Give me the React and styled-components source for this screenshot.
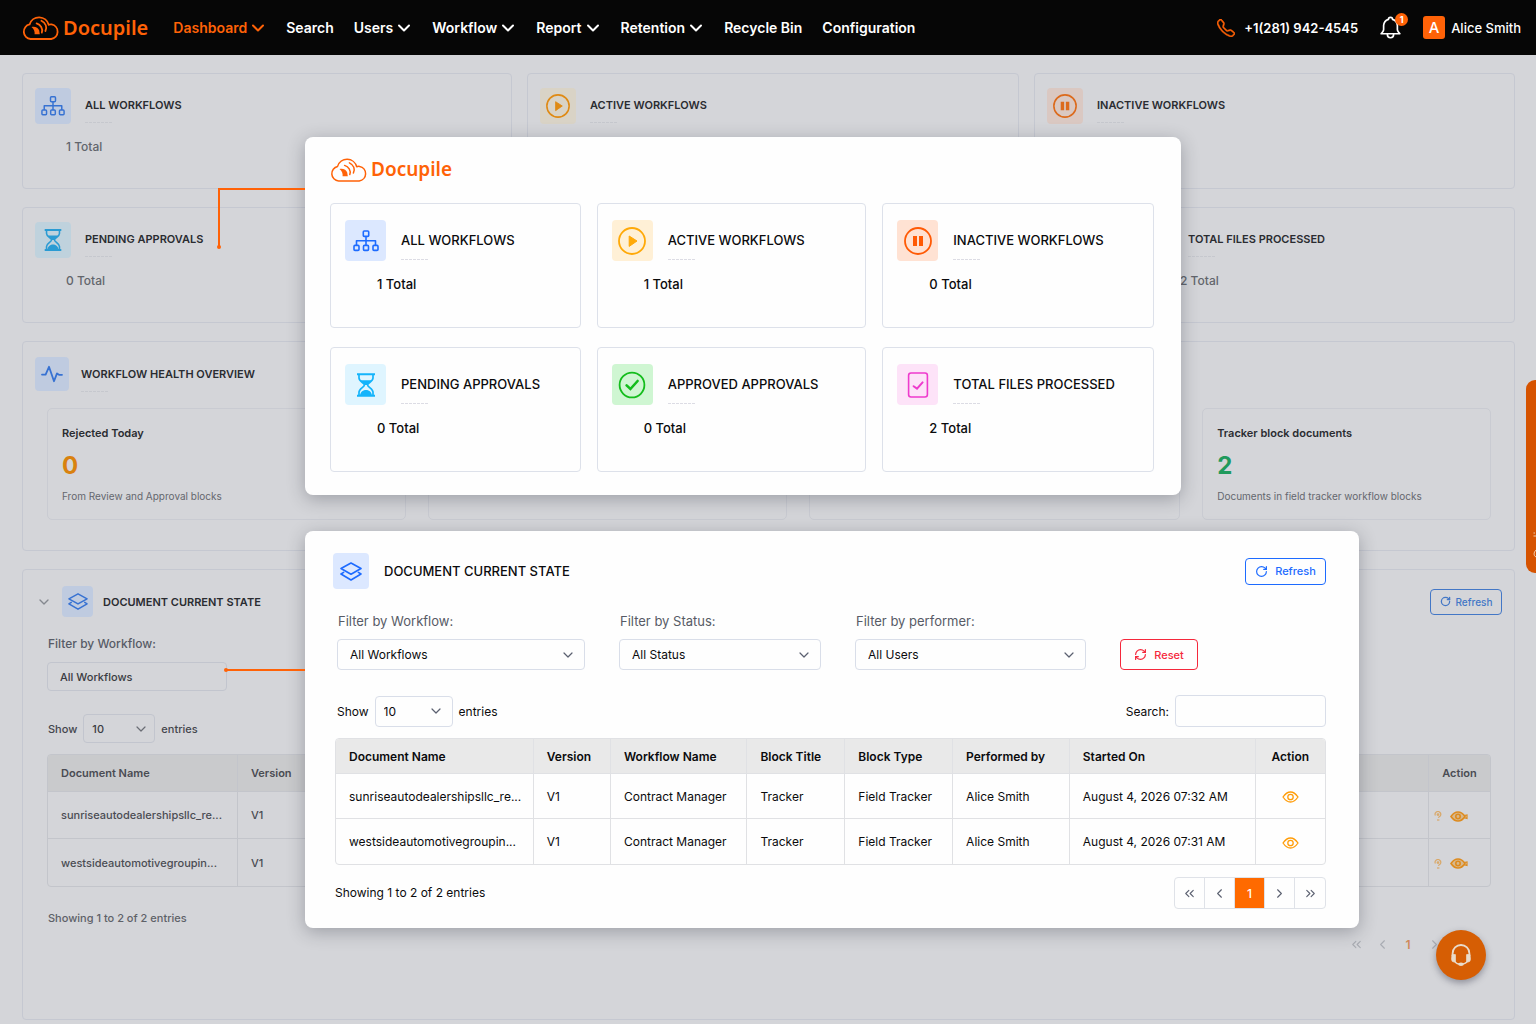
import React from "react";
import styled, { createGlobalStyle } from "styled-components";
import { ChevronDown, ChevronLeft, ChevronRight, ChevronsLeft, ChevronsRight, RotateCw, RefreshCw } from "lucide-react";
import { BsTelephone } from "react-icons/bs";

const GlobalStyle = createGlobalStyle`
    * {
        box-sizing: border-box;
    }
    body {
        margin: 0;
        font-family: Inter, "Liberation Sans", sans-serif;
        background: #d4d5d9;
        color: #0b0b0d;
    }
    button, select, input {
        font-family: inherit;
    }
`

const Page = styled.div`
    position: relative;
    min-height: 100vh;
    overflow: hidden;
`

/* ---------- top bar ---------- */

const Header = styled.header`
    display: flex;
    align-items: center;
    height: 55px;
    padding: 0 15px 0 22px;
    background: #060606;
`

const LogoLink = styled.a`
    display: flex;
    align-items: center;
    gap: 3px;
    height: 28px;
    color: #ff6207;
    font-family: "Noto Sans", "Open Sans", sans-serif;
    font-size: ${props => props.$large ? "20px" : "19px"};
    font-weight: 600;
    line-height: 28px;
    text-decoration: none;
`

const Nav = styled.nav`
    margin-left: 25px;
    margin-right: auto;
`

const NavList = styled.ul`
    display: flex;
    gap: 20px;
    margin: 0;
    padding: 0;
    list-style: none;
`

const NavLink = styled.a`
    display: flex;
    align-items: center;
    gap: 1px;
    color: ${props => props.$active ? "#ff6207" : "white"};
    font-size: 14px;
    font-weight: 600;
    line-height: 20px;
    text-decoration: none;
    white-space: nowrap;
    svg {
        margin-right: -2px;
    }
`

const HeaderRight = styled.div`
    display: flex;
    align-items: center;
    gap: 20px;
    color: white;
    white-space: nowrap;
`

const PhoneLink = styled.a`
    display: flex;
    align-items: center;
    gap: 9px;
    color: white;
    font-size: 13px;
    font-weight: 600;
    text-decoration: none;
    svg {
        color: #ff6207;
        stroke: #ff6207;
        stroke-width: 0.5px;
    }
`

const BellButton = styled.button`
    position: relative;
    display: flex;
    padding: 0;
    border: 0;
    background: none;
    color: white;
    cursor: pointer;
`

const BellBadge = styled.span`
    position: absolute;
    top: -2px;
    right: -5px;
    width: 13px;
    height: 13px;
    border-radius: 50%;
    background: #ff6207;
    font-size: 9px;
    font-weight: 700;
    line-height: 13px;
    text-align: center;
`

const UserButton = styled.button`
    display: flex;
    align-items: center;
    gap: 6px;
    padding: 0;
    border: 0;
    background: none;
    color: white;
    font-size: 13px;
    font-weight: 500;
    cursor: pointer;
`

const Avatar = styled.span`
    width: 22px;
    height: 23px;
    border-radius: 3px;
    background: #ff6207;
    font-size: 15px;
    font-weight: 500;
    line-height: 23px;
`

/* ---------- dashboard behind the panels ---------- */

const Main = styled.main`
    display: flex;
    flex-direction: column;
    gap: 18px;
    padding: 18px 21px 4px 22px;
`

const StatGrid = styled.div`
    display: grid;
    grid-template-columns: ${props => props.$columns};
    gap: ${props => props.$gap};
`

const Card = styled.section`
    border: 1px solid ${props => props.$dim ? "#c5c8d1" : "#dde1ea"};
    border-radius: 4px;
`

const StatBox = styled(Card)`
    min-height: ${props => props.$dim ? "116px" : "125px"};
    padding: ${props => props.$dim ? "14px 12px" : "16px 14px"};
`

const StatHead = styled.div`
    display: flex;
    gap: ${props => props.$dim ? "14px" : "15px"};
`

const tints = {
    blue: { color: "#1d6bff", bg: "#dce8ff", dimColor: "#3772d2", dimBg: "#bfcbe0" },
    yellow: { color: "#ffa908", bg: "#fff0d6", dimColor: "#df8a14", dimBg: "#d9d3c6" },
    orange: { color: "#ff5a05", bg: "#ffe2d3", dimColor: "#dc6a1c", dimBg: "#dac8c2" },
    cyan: { color: "#14b4fb", bg: "#dff5ff", dimColor: "#2a9bd3", dimBg: "#bfd2dd" },
    green: { color: "#14bd1c", bg: "#cff6d2", dimColor: "#2f9e3c", dimBg: "#bfd6c4" },
    pink: { color: "#ee3bcd", bg: "#fde3f8", dimColor: "#c04aa9", dimBg: "#d8c6d5" },
}

const IconTile = styled.span`
    display: flex;
    flex: none;
    align-items: center;
    justify-content: center;
    width: ${props => props.$size}px;
    height: ${props => props.$size}px;
    border-radius: 4px;
    color: ${props => props.$dim ? tints[props.$tint].dimColor : tints[props.$tint].color};
    background: ${props => props.$dim ? tints[props.$tint].dimBg : tints[props.$tint].bg};
`

const TitleGroup = styled.div`
    padding-top: ${props => props.$dim ? "7px" : "10px"};
`

const Title = styled.h2`
    margin: 0;
    font-size: ${props => props.$dim ? "11px" : "13px"};
    font-weight: ${props => props.$dim ? "600" : "500"};
    line-height: 20px;
    color: ${props => props.$dim ? "#2a2c31" : "#0b0b0d"};
    white-space: nowrap;
`

const Dashes = styled.div`
    width: 28px;
    height: 1px;
    margin-top: ${props => props.$dim ? "7px" : "9px"};
    background: repeating-linear-gradient(90deg, ${props => props.$dim ? "#c6c8ce" : "#dcdce4"} 0 3px, transparent 3px 4px);
`

const Total = styled.p`
    margin: 13px 0 0;
    padding-left: ${props => props.$indent}px;
    font-size: ${props => props.$dim ? "12px" : "13px"};
    font-weight: 500;
    line-height: 20px;
    color: ${props => props.$dim ? "#62656c" : "#0b0b0d"};
`

const HealthCard = styled(Card)`
    padding: 15px 23px 30px 24px;
`

const HealthHead = styled.div`
    display: flex;
    gap: 12px;
    margin: 0 0 16px -12px;
`

const HealthGrid = styled.div`
    display: grid;
    grid-template-columns: 359fr 360fr 371fr 289fr;
    gap: 22px;
`

const HealthBox = styled.div`
    height: 112px;
    padding: 15px 14px;
    border: 1px solid #c9cbd2;
    border-radius: 5px;
`

const HealthLabel = styled.h3`
    margin: 0;
    font-size: 11px;
    font-weight: 600;
    line-height: 18px;
    color: #2a2c31;
`

const HealthValue = styled.p`
    margin: 8px 0;
    font-size: 24px;
    font-weight: 700;
    line-height: 32px;
    color: ${props => props.$color};
`

const HealthNote = styled.p`
    margin: 0;
    font-size: 10px;
    font-weight: 400;
    line-height: 12px;
    color: #64676e;
`

const StateCard = styled(Card)`
    min-height: 451px;
    padding: 16px 23px 16px 24px;
`

const StateHead = styled.div`
    display: flex;
    align-items: center;
    gap: ${props => props.$dim ? "10px" : "15px"};
    margin-left: ${props => props.$dim ? "-11px" : "0"};
    margin-right: ${props => props.$dim ? "-11px" : "0"};
    > svg {
        color: #85888f;
    }
    > button {
        margin-left: auto;
    }
`

/* ---------- controls ---------- */

const OutlineButton = styled.button`
    display: flex;
    flex: none;
    align-items: center;
    justify-content: center;
    gap: ${props => props.$dim ? "5px" : "7px"};
    height: ${props => props.$height}px;
    width: ${props => props.$width}px;
    padding: 0;
    border: 1px solid ${props => props.$color};
    border-radius: 4px;
    background: transparent;
    color: ${props => props.$color};
    font-size: ${props => props.$dim ? "10px" : "11px"};
    font-weight: 500;
    cursor: pointer;
`

const Filters = styled.div`
    display: flex;
    align-items: flex-end;
    gap: 34px;
    margin-top: ${props => props.$dim ? "18px" : "23px"};
    padding-left: ${props => props.$dim ? "0" : "4px"};
`

const FilterField = styled.div`
    flex: 0 1 ${props => props.$width}px;
`

const FilterLabel = styled.label`
    display: block;
    margin-bottom: 9px;
    padding-left: 1px;
    font-size: ${props => props.$dim ? "12px" : "13px"};
    font-weight: ${props => props.$dim ? "500" : "400"};
    line-height: 18px;
    color: #575b66;
`

const SelectWrap = styled.div`
    display: grid;
    align-items: center;
    width: ${props => props.$width ? props.$width + "px" : "100%"};
    > * {
        grid-area: 1 / 1;
    }
    svg {
        justify-self: end;
        margin-right: ${props => props.$dim ? "6px" : "9px"};
        color: ${props => props.$dim ? "#6a6d75" : "#5b6070"};
        pointer-events: none;
    }
`

const StyledSelect = styled.select`
    appearance: none;
    width: 100%;
    height: ${props => props.$dim ? "29px" : "31px"};
    padding: 0 ${props => props.$pad}px;
    border: 1px solid ${props => props.$dim ? "#c2c5ce" : "#d9dee9"};
    border-radius: 4px;
    background: transparent;
    color: ${props => props.$dim ? "#3a3c42" : "#0b0b0d"};
    font-size: ${props => props.$dim ? "11px" : "12px"};
    font-weight: ${props => props.$dim ? "500" : "400"};
`

const Toolbar = styled.div`
    display: flex;
    align-items: center;
    justify-content: space-between;
    margin: ${props => props.$dim ? "23px 0 11px" : "25px 0 11px"};
    padding-left: ${props => props.$dim ? "1px" : "4px"};
    font-size: ${props => props.$dim ? "11px" : "12px"};
    font-weight: ${props => props.$dim ? "500" : "400"};
    color: ${props => props.$dim ? "#44464d" : "#0b0b0d"};
`

const ToolbarGroup = styled.div`
    display: flex;
    align-items: center;
    gap: 6px;
`

const SearchInput = styled.input`
    width: 151px;
    height: 32px;
    padding: 0 10px;
    border: 1px solid #d9dee9;
    border-radius: 4px;
    background: transparent;
    font-size: 12px;
`

const TableWrap = styled.div`
    margin-left: ${props => props.$dim ? "0" : "2px"};
    border: 1px solid ${props => props.$dim ? "#c3c5cb" : "#e0e1e4"};
    border-radius: 4px;
    overflow: hidden;
`

const Table = styled.table`
    width: 100%;
    table-layout: fixed;
    border-collapse: separate;
    border-spacing: 0;
    font-size: ${props => props.$dim ? "11px" : "12px"};
    color: ${props => props.$dim ? "#4a4c53" : "#0b0b0d"};
    th, td {
        padding: 0 13px;
        border-right: 1px solid ${props => props.$dim ? "#c3c5cb" : "#e0e1e4"};
        border-bottom: 1px solid ${props => props.$dim ? "#c3c5cb" : "#e0e1e4"};
        text-align: left;
        white-space: nowrap;
    }
    th {
        height: ${props => props.$dim ? "37px" : "35px"};
        background: ${props => props.$dim ? "#c9cacc" : "#e9e9e9"};
        font-weight: 600;
    }
    td {
        height: ${props => props.$dim ? "47px" : "45px"};
        font-weight: ${props => props.$dim ? "500" : "400"};
    }
    th:last-child, td:last-child {
        padding: 0 5px;
        border-right: 0;
        text-align: center;
    }
    td:last-child {
        text-align: ${props => props.$dim ? "left" : "center"};
    }
    tbody tr:last-child td {
        border-bottom: 0;
    }
`

const ActionButton = styled.button`
    display: inline-flex;
    align-items: center;
    gap: 8px;
    padding: 0;
    border: 0;
    background: none;
    color: ${props => props.$dim ? "#dd8b1f" : "#ff9d0a"};
    vertical-align: middle;
    cursor: pointer;
`

const Showing = styled.p`
    margin: 0;
    font-size: ${props => props.$dim ? "11px" : "12px"};
    font-weight: ${props => props.$dim ? "500" : "400"};
    line-height: 18px;
    color: ${props => props.$dim ? "#5e6168" : "#0b0b0d"};
`

const PanelFooter = styled.div`
    display: flex;
    align-items: center;
    justify-content: space-between;
    margin-top: 12px;
    padding-left: 2px;
`

const DimFooter = styled.div`
    padding: 22px 18px 0 1px;
`

const Pager = styled.div`
    display: flex;
    border: 1px solid #dfe2e8;
    border-radius: 4px;
`

const PagerButton = styled.button`
    display: flex;
    align-items: center;
    justify-content: center;
    width: 30px;
    height: 30px;
    padding: 0;
    border: 0;
    border-right: 1px solid #dfe2e8;
    background: ${props => props.$current ? "#ff6a00" : "transparent"};
    color: ${props => props.$current ? "white" : "#5b6070"};
    font-size: 12px;
    font-weight: 500;
    cursor: pointer;
    &:last-child {
        border-right: 0;
    }
`

const DimPager = styled(Pager)`
    justify-content: flex-end;
    margin-top: 8px;
    border: 0;
    ${PagerButton} {
        width: 26px;
        height: 18px;
        border: 0;
        background: none;
        color: #a9acb3;
    }
    ${PagerButton}[aria-current] {
        color: #d08a5a;
        font-weight: 600;
    }
`

/* ---------- panels on top ---------- */

const Overlay = styled.div`
    position: absolute;
    top: 137px;
    left: 305px;
    right: 177px;
    display: flex;
    flex-direction: column;
    gap: 36px;
`

const Panel = styled.section`
    position: relative;
    border-radius: 8px;
    background: #fefefe;
    box-shadow: 0 4px 18px rgba(30, 34, 48, 0.3);
`

const SummaryPanel = styled(Panel)`
    margin-right: 178px;
    padding: 18px 27px 23px 25px;
    ${StatGrid} {
        margin-top: 20px;
    }
`

const StatePanel = styled(Panel)`
    padding: 22px 33px 19px 28px;
`

const Connector = styled.span`
    position: absolute;
    right: 100%;
    top: ${props => props.$top}px;
    width: ${props => props.$width}px;
    height: ${props => props.$height}px;
    border-top: 2px solid #ff6207;
    border-left: ${props => props.$height > 2 ? "2px solid #ff6207" : "0"};
    &::after {
        content: "";
        position: absolute;
        left: -3px;
        bottom: -1px;
        width: 4px;
        height: 4px;
        border-radius: 50%;
        background: #ff6207;
    }
`

const SideTab = styled.button`
    position: absolute;
    top: 380px;
    right: 0;
    display: flex;
    align-items: flex-start;
    justify-content: flex-end;
    width: 10px;
    height: 193px;
    padding: 150px 0 0;
    border: 0;
    border-radius: 9px 0 0 9px;
    background: #d65300;
    cursor: pointer;
`

const HelpButton = styled.button`
    position: absolute;
    top: 930px;
    right: 50px;
    display: flex;
    align-items: center;
    justify-content: center;
    width: 50px;
    height: 50px;
    padding: 0;
    border: 0;
    border-radius: 50%;
    background: #d65e04;
    box-shadow: 0 3px 7px rgba(40, 40, 60, 0.4);
    color: #e9dccb;
    cursor: pointer;
`

/* ---------- icons ---------- */

const CloudMark = ({ stroke }) => (
    <svg width="38" height="27" viewBox="0 0 38 27" fill="none" stroke="currentColor" strokeWidth={stroke} strokeLinecap="round" strokeLinejoin="round">
        <path d="M8.6 25H29.2A7.4 7.4 0 0 0 29.6 10.4Q28 10.2 26.7 10.8A9.9 9.9 0 0 0 7.6 10.4A7.4 7.4 0 0 0 8.6 25Z" />
        <path d="M9.5 13C13 12.2 16.4 13.6 17.2 16.6L17.8 20.3H12.6C13 17.4 11.8 15 9.5 13Z" fill="currentColor" stroke="none" />
        <path d="M14.6 9.4C18.6 10.8 21.2 14.4 19.8 18.6" />
        <path d="M19.4 6.8C23.8 9 25.4 13 23.4 17" />
    </svg>
)

const BellIcon = () => (
    <svg width="25" height="25" viewBox="0 0 24 24" fill="none" stroke="currentColor" strokeWidth="1.6" strokeLinecap="round" strokeLinejoin="round">
        <path d="M15 18H21L19.4 16A3 3 0 0 1 18.6 14V10A6.6 6.6 0 0 0 14 4.2A2 2 0 0 0 10 4.2A6.6 6.6 0 0 0 5.4 10V14A3 3 0 0 1 4.6 16L3 18H9M15 18V18.8A3 3 0 0 1 9 18.8V18M15 18H9" />
    </svg>
)

const SitemapIcon = ({ size = 26 }) => (
    <svg width={size} height={size} viewBox="0 0 26 26" fill="none" stroke="currentColor" strokeWidth="1.6" strokeLinejoin="round">
        <rect x="10.3" y="3" width="5.4" height="5.4" rx="1" />
        <rect x="1" y="17.4" width="5" height="5" rx="1" />
        <rect x="10.5" y="17.4" width="5" height="5" rx="1" />
        <rect x="20" y="17.4" width="5" height="5" rx="1" />
        <path d="M13 8.4V17.4M3.5 17.4V12.8H22.5V17.4" />
    </svg>
)

const PlayIcon = ({ size = 28 }) => (
    <svg width={size} height={size} viewBox="0 0 28 28" fill="none" stroke="currentColor" strokeWidth="1.8">
        <circle cx="14" cy="14" r="13" />
        <path d="M11.2 9L19 14L11.2 19.4Z" fill="currentColor" strokeWidth="1" strokeLinejoin="round" />
    </svg>
)

const PauseIcon = ({ size = 28 }) => (
    <svg width={size} height={size} viewBox="0 0 28 28" fill="none" stroke="currentColor" strokeWidth="1.8">
        <circle cx="14" cy="14" r="13" />
        <path d="M9 9H13V19H9ZM15 9H19V19H15Z" fill="currentColor" stroke="none" />
    </svg>
)

const HourglassIcon = ({ size = 26 }) => (
    <svg width={size} height={size} viewBox="0 0 26 26" fill="none" stroke="currentColor" strokeWidth="1.7">
        <path d="M4 2.2H22M4 23.8H22" strokeWidth="2" />
        <path d="M6 2.5V6C6 9.6 11.4 11 11.4 13S6 16.6 6 20V23.5M20 2.5V6C20 9.6 14.6 11 14.6 13S20 16.6 20 20V23.5" />
        <path d="M7 8.2H19C17.6 10.2 14.6 11.4 14 13H12C11.4 11.4 8.4 10.2 7 8.2ZM7 23.4C7.4 19.8 10.4 18 13 18S18.6 19.8 19 23.4Z" fill="currentColor" stroke="none" />
    </svg>
)

const CheckCircleIcon = ({ size = 28 }) => (
    <svg width={size} height={size} viewBox="0 0 28 28" fill="none" stroke="currentColor" strokeWidth="1.8">
        <circle cx="14" cy="14" r="12.4" />
        <path d="M8.6 14.4L12.4 18L19.6 10" strokeWidth="2.6" strokeLinecap="round" />
    </svg>
)

const FileCheckIcon = ({ size = 26 }) => (
    <svg width={size} height={size} viewBox="0 0 26 26" fill="none" stroke="currentColor" strokeWidth="1.6" strokeLinecap="round">
        <rect x="3.6" y="1" width="18.8" height="24" rx="2.4" />
        <path d="M8.6 14.2L12 16.6L17.6 10.4" strokeWidth="2" />
    </svg>
)

const PulseIcon = () => (
    <svg width="22" height="18" viewBox="0 0 22 18" fill="none" stroke="currentColor" strokeWidth="1.8" strokeLinecap="round" strokeLinejoin="round">
        <path d="M1 9.6H4.6L8 1.8L13 16.2L16 8.4L18 9.8H21" />
    </svg>
)

const LayersIcon = ({ width = 22 }) => (
    <svg width={width} height="19" viewBox="0 0 22 19" fill="none" stroke="currentColor" strokeWidth="1.6" strokeLinejoin="round" strokeLinecap="round">
        <path d="M11 1L21 6.5L11 12.2L1 6.5Z" />
        <path d="M3.6 10.4L1 12L11 18L21 12L18.4 10.4" />
    </svg>
)

const EyeIcon = () => (
    <svg width="17" height="12" viewBox="0 0 17 12" fill="none" stroke="currentColor" strokeWidth="1.3">
        <path d="M1 6Q4.4 1 8.5 1T16 6Q12.6 11 8.5 11T1 6Z" />
        <circle cx="8.5" cy="6" r="2.7" />
    </svg>
)

const DimEyeIcon = () => (
    <svg width="18" height="11" viewBox="0 0 18 11" fill="none" stroke="currentColor" strokeWidth="1.6">
        <path d="M1 5.5Q4 1 8 1T15 5.5Q12 10 8 10T1 5.5Z" fill="currentColor" fillOpacity="0.4" />
        <circle cx="8" cy="5.5" r="2.2" />
        <path d="M14 4.6L17 4V7.4L14 6.6" strokeWidth="1.2" />
    </svg>
)

const AssignIcon = () => (
    <svg width="8" height="10" viewBox="0 0 8 10" fill="none" stroke="currentColor" strokeWidth="1.2" opacity="0.6">
        <path d="M1.4 4.6A2.8 2.8 0 1 1 6 5.2L4.2 6.6" />
        <circle cx="4" cy="3.6" r="0.8" />
        <path d="M3 9H5.4" />
    </svg>
)

const HeadsetIcon = () => (
    <svg width="22" height="24" viewBox="0 0 22 24" fill="none" stroke="currentColor" strokeWidth="1.8">
        <path d="M2.6 13V10.4A8.4 8.4 0 0 1 19.4 10.4V13" />
        <path d="M2 11.6H5.4V19H4A2.6 2.6 0 0 1 1.6 16.4ZM20 11.6H16.6V19H18A2.6 2.6 0 0 0 20.4 16.4Z" fill="currentColor" strokeWidth="0.8" />
        <path d="M5 19Q6.8 21 10 21.2" strokeWidth="1.4" />
        <path d="M17 19Q15.4 20.8 12 21.2" strokeWidth="1.4" />
        <ellipse cx="11" cy="21.2" rx="2.8" ry="1.8" fill="currentColor" stroke="none" />
    </svg>
)

const navItems = [
    { label: "Dashboard", menu: true, active: true },
    { label: "Search" },
    { label: "Users", menu: true },
    { label: "Workflow", menu: true },
    { label: "Report", menu: true },
    { label: "Retention", menu: true },
    { label: "Recycle Bin" },
    { label: "Configuration" },
]

const stats = [
    { title: "ALL WORKFLOWS", total: 1, tint: "blue", Icon: SitemapIcon },
    { title: "ACTIVE WORKFLOWS", total: 1, tint: "yellow", Icon: PlayIcon },
    { title: "INACTIVE WORKFLOWS", total: 0, tint: "orange", Icon: PauseIcon },
    { title: "PENDING APPROVALS", total: 0, tint: "cyan", Icon: HourglassIcon },
    { title: "APPROVED APPROVALS", total: 0, tint: "green", Icon: CheckCircleIcon },
    { title: "TOTAL FILES PROCESSED", total: 2, tint: "pink", Icon: FileCheckIcon, dimIndent: 42 },
]

const columns = ["Document Name", "Version", "Workflow Name", "Block Title", "Block Type", "Performed by", "Started On", "Action"]
const panelWidths = ["20%", "7.8%", "13.8%", "9.9%", "10.9%", "11.8%", "18.8%", "7%"]
const dimWidths = ["190px", "100px", "160px", "130px", "140px", "140px", "auto", "61px"]

const documents = [
    ["sunriseautodealershipsllc_re...", "V1", "Contract Manager", "Tracker", "Field Tracker", "Alice Smith", "August 4, 2026 07:32 AM"],
    ["westsideautomotivegroupin...", "V1", "Contract Manager", "Tracker", "Field Tracker", "Alice Smith", "August 4, 2026 07:31 AM"],
]

const Logo = ({ large }) => (
    <LogoLink href="#" $large={large}>
        <CloudMark stroke={large ? 1.8 : 1.5} />
        Docupile
    </LogoLink>
)

const Stat = ({ stat, dim }) => {
    const { title, total, tint, Icon, dimIndent } = stat
    return (
        <StatBox $dim={dim}>
            <StatHead $dim={dim}>
                <IconTile $size={dim ? 36 : 41} $tint={tint} $dim={dim}>
                    <Icon size={dim ? 24 : undefined} />
                </IconTile>
                <TitleGroup $dim={dim}>
                    <Title $dim={dim}>{title}</Title>
                    <Dashes $dim={dim} />
                </TitleGroup>
            </StatHead>
            <Total $dim={dim} $indent={dim ? dimIndent || 31 : 32}>{total} Total</Total>
        </StatBox>
    )
}

const Select = ({ id, value, width, dim, pad = 12, arrow = true }) => (
    <SelectWrap $width={width} $dim={dim}>
        <StyledSelect id={id} $dim={dim} $pad={pad} defaultValue={value}>
            <option>{value}</option>
        </StyledSelect>
        {arrow && <ChevronDown size={16} strokeWidth={1.8} />}
    </SelectWrap>
)

const Filter = ({ id, label, value, width, dim, arrow }) => (
    <FilterField $width={width}>
        <FilterLabel htmlFor={id} $dim={dim}>{label}</FilterLabel>
        <Select id={id} value={value} dim={dim} arrow={arrow} />
    </FilterField>
)

const EntriesPicker = ({ id, dim }) => (
    <ToolbarGroup>
        <label htmlFor={id}>Show</label>
        <Select id={id} value="10" width={dim ? 72 : 78} dim={dim} pad={8} />
        <span>entries</span>
    </ToolbarGroup>
)

const DocumentTable = ({ dim }) => (
    <TableWrap $dim={dim}>
        <Table $dim={dim}>
            <colgroup>
                {(dim ? dimWidths : panelWidths).map((width, i) => <col key={i} width={width} />)}
            </colgroup>
            <thead>
                <tr>
                    {columns.map(column => <th key={column} scope="col">{column}</th>)}
                </tr>
            </thead>
            <tbody>
                {documents.map(row => (
                    <tr key={row[0]}>
                        {row.map((cell, i) => <td key={i}>{cell}</td>)}
                        <td>
                            <ActionButton $dim={dim} aria-label="View document">
                                {dim ? <><AssignIcon /><DimEyeIcon /></> : <EyeIcon />}
                            </ActionButton>
                        </td>
                    </tr>
                ))}
            </tbody>
        </Table>
    </TableWrap>
)

const PagerButtons = () => (
    <>
        <PagerButton aria-label="First page"><ChevronsLeft size={15} strokeWidth={1.8} /></PagerButton>
        <PagerButton aria-label="Previous page"><ChevronLeft size={15} strokeWidth={1.8} /></PagerButton>
        <PagerButton $current aria-current="page">1</PagerButton>
        <PagerButton aria-label="Next page"><ChevronRight size={15} strokeWidth={1.8} /></PagerButton>
        <PagerButton aria-label="Last page"><ChevronsRight size={15} strokeWidth={1.8} /></PagerButton>
    </>
)

const TopBar = () => (
    <Header>
        <Logo large />
        <Nav>
            <NavList>
                {navItems.map(item => (
                    <li key={item.label}>
                        <NavLink href="#" $active={item.active}>
                            {item.label}
                            {item.menu && <ChevronDown size={20} strokeWidth={2.4} />}
                        </NavLink>
                    </li>
                ))}
            </NavList>
        </Nav>
        <HeaderRight>
            <PhoneLink href="tel:+12819424545">
                <BsTelephone size={18} />
                +1(281) 942-4545
            </PhoneLink>
            <BellButton aria-label="Notifications">
                <BellIcon />
                <BellBadge>1</BellBadge>
            </BellButton>
            <UserButton>
                <Avatar>A</Avatar>
                Alice Smith
            </UserButton>
        </HeaderRight>
    </Header>
)

const Dashboard = () => (
    <Main>
        <StatGrid $columns="490fr 492fr 481fr" $gap="15px">
            {stats.slice(0, 3).map(stat => <Stat key={stat.title} stat={stat} dim />)}
        </StatGrid>
        <StatGrid $columns="536fr 537fr 390fr" $gap="15px">
            <Stat stat={stats[3]} dim />
            <StatBox $dim />
            <Stat stat={stats[5]} dim />
        </StatGrid>
        <HealthCard $dim>
            <HealthHead>
                <IconTile $size={34} $tint="blue" $dim><PulseIcon /></IconTile>
                <TitleGroup $dim>
                    <Title $dim>WORKFLOW HEALTH OVERVIEW</Title>
                    <Dashes $dim />
                </TitleGroup>
            </HealthHead>
            <HealthGrid>
                <HealthBox>
                    <HealthLabel>Rejected Today</HealthLabel>
                    <HealthValue $color="#d9820f">0</HealthValue>
                    <HealthNote>From Review and Approval blocks</HealthNote>
                </HealthBox>
                <HealthBox />
                <HealthBox />
                <HealthBox>
                    <HealthLabel>Tracker block documents</HealthLabel>
                    <HealthValue $color="#1f9a5c">2</HealthValue>
                    <HealthNote>Documents in field tracker workflow blocks</HealthNote>
                </HealthBox>
            </HealthGrid>
        </HealthCard>
        <StateCard $dim>
            <StateHead $dim>
                <ChevronDown size={16} strokeWidth={2} />
                <IconTile $size={31} $tint="blue" $dim><LayersIcon width={20} /></IconTile>
                <Title $dim>DOCUMENT CURRENT STATE</Title>
                <OutlineButton $dim $color="#4377c6" $width={72} $height={26}>
                    <RotateCw size={11} strokeWidth={2.8} />
                    Refresh
                </OutlineButton>
            </StateHead>
            <Filters $dim>
                <Filter id="page-workflow" label="Filter by Workflow:" value="All Workflows" width={180} arrow={false} dim />
            </Filters>
            <Toolbar $dim>
                <EntriesPicker id="page-entries" dim />
            </Toolbar>
            <DocumentTable dim />
            <DimFooter>
                <Showing $dim>Showing 1 to 2 of 2 entries</Showing>
                <DimPager as="nav" aria-label="Dashboard pages"><PagerButtons /></DimPager>
            </DimFooter>
        </StateCard>
    </Main>
)

const App = () => {
    return (
        <Page>
            <GlobalStyle />
            <TopBar />
            <Dashboard />

            <Overlay>
                <SummaryPanel>
                    <Connector $top={51} $width={87} $height={60} />
                    <Logo />
                    <StatGrid $columns="251fr 270fr 272fr" $gap="19px 16px">
                        {stats.map(stat => <Stat key={stat.title} stat={stat} />)}
                    </StatGrid>
                </SummaryPanel>

                <StatePanel>
                    <Connector $top={138} $width={78} $height={2} />
                    <StateHead>
                        <IconTile $size={36} $tint="blue"><LayersIcon /></IconTile>
                        <Title>DOCUMENT CURRENT STATE</Title>
                        <OutlineButton $color="#1d6bff" $width={81} $height={27}>
                            <RotateCw size={13} strokeWidth={2.2} />
                            Refresh
                        </OutlineButton>
                    </StateHead>
                    <Filters>
                        <Filter id="workflow" label="Filter by Workflow:" value="All Workflows" width={248} />
                        <Filter id="status" label="Filter by Status:" value="All Status" width={202} />
                        <Filter id="performer" label="Filter by performer:" value="All Users" width={231} />
                        <OutlineButton $color="#f5283c" $width={78} $height={31}>
                            <RefreshCw size={13} strokeWidth={2.2} />
                            Reset
                        </OutlineButton>
                    </Filters>
                    <Toolbar>
                        <EntriesPicker id="entries" />
                        <ToolbarGroup>
                            <label htmlFor="search">Search:</label>
                            <SearchInput id="search" type="text" />
                        </ToolbarGroup>
                    </Toolbar>
                    <DocumentTable />
                    <PanelFooter>
                        <Showing>Showing 1 to 2 of 2 entries</Showing>
                        <Pager as="nav" aria-label="Pages"><PagerButtons /></Pager>
                    </PanelFooter>
                </StatePanel>
            </Overlay>

            <SideTab aria-label="Feedback">
                <svg width="3" height="30" viewBox="0 0 3 30" fill="none" stroke="#efc9a8" strokeWidth="1">
                    <path d="M0.5 3H2M0.5 6H3M3 20Q1 22 1 24T3 27" />
                </svg>
            </SideTab>
            <HelpButton aria-label="Support"><HeadsetIcon /></HelpButton>
        </Page>
    )
}

export default App;
